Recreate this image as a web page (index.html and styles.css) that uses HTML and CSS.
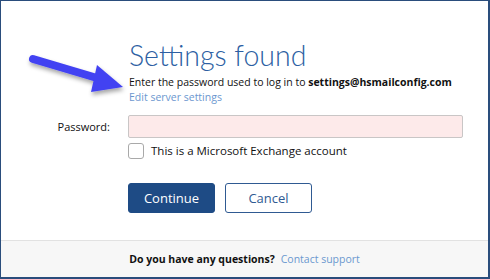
FILE: index.html
```html
<!DOCTYPE html>
<html lang="en">
<head>
  <meta charset="UTF-8" />
  <meta name="viewport" content="width=device-width, initial-scale=1" />
  <title>Settings found</title>
<link rel="stylesheet" href="styles.css">
</head>
<body>

  <div class="frame">

    <!-- Annotation arrow -->
    <svg class="arrow" width="110" height="60" viewBox="0 0 110 60">
      <defs>
        <filter id="shadow" x="-20%" y="-20%" width="150%" height="160%">
          <feDropShadow dx="1" dy="3" stdDeviation="2" flood-color="#000" flood-opacity="0.35" />
        </filter>
      </defs>
      <g filter="url(#shadow)" fill="#4343f2">
        <line x1="8" y1="10" x2="72" y2="29" stroke="#4343f2" stroke-width="8" stroke-linecap="round" />
        <polygon points="72,16 98,38 66,43" />
      </g>
    </svg>

    <div class="main">
      <h1 class="title">Settings found</h1>
      <p class="intro">Enter the password used to log in to <b>settings@hsmailconfig.com</b></p>
      <a href="#" class="edit">Edit server settings</a>

      <label class="label" for="pw">Password:</label>
      <input id="pw" class="input" type="password" />

      <label class="check">
        <span class="box"></span>
        This is a Microsoft Exchange account
      </label>

      <div class="actions">
        <button class="btn primary">Continue</button>
        <button class="btn secondary">Cancel</button>
      </div>
    </div>

    <div class="footer">
      <b>Do you have any questions?</b>
      <a href="#" class="support">Contact support</a>
    </div>

  </div>

</body>
</html>
```

FILE: styles.css
```css
    body {
      margin: 0;
      padding: 0;
      background-color: #fff;
      font-family: 'Open Sans', 'Noto Sans', sans-serif;
      color: #111;
    }

    .frame {
      position: relative;
      width: 490px;
      height: 279px;
      box-sizing: border-box;
      border: solid #2a4d7c;
      border-width: 1px 2px 2px 1px;
      display: flex;
      flex-direction: column;
      background: #fff;
    }

    .arrow {
      position: absolute;
      top: 48px;
      left: 24px;
    }

    .main {
      flex: 1;
      display: grid;
      grid-template-columns: 127px 335px;
      align-content: start;
      padding-top: 35px;
    }

    .title {
      grid-column: 2;
      margin: 0;
      font-family: 'Lato', sans-serif;
      font-weight: 300;
      font-size: 28.5px;
      line-height: 39px;
      color: #2d5fa3;
      padding-left: 1px;
    }

    .intro {
      grid-column: 2;
      margin: 0;
      font-size: 10.5px;
      line-height: 15px;
      white-space: nowrap;
      padding-left: 1px;
    }

    .edit {
      grid-column: 2;
      justify-self: start;
      font-size: 10.5px;
      line-height: 15px;
      color: #6b97cf;
      text-decoration: none;
      padding-left: 1px;
    }

    .label {
      grid-column: 1;
      margin-top: 10px;
      height: 23px;
      line-height: 23px;
      text-align: right;
      padding-right: 18px;
      font-size: 11px;
    }

    .input {
      grid-column: 2;
      margin: 10px 0 0;
      height: 23px;
      box-sizing: border-box;
      border: 1px solid #c9c6c6;
      border-radius: 2px;
      background: #fdeaea;
      outline: none;
    }

    .check {
      grid-column: 2;
      display: flex;
      align-items: center;
      gap: 7px;
      margin-top: 5px;
      font-size: 11.5px;
      line-height: 16px;
    }

    .box {
      width: 16px;
      height: 16px;
      box-sizing: border-box;
      border: 1px solid #a9a9a9;
      border-radius: 3px;
      background: #fff;
    }

    .actions {
      grid-column: 2;
      display: flex;
      gap: 10px;
      margin-top: 24px;
    }

    .btn {
      width: 87px;
      height: 30px;
      border-radius: 3px;
      font-family: 'Open Sans', 'Noto Sans', sans-serif;
      font-size: 13px;
      cursor: pointer;
    }

    .primary {
      background: #1e4b85;
      border: 1px solid #1e4b85;
      color: #fff;
    }

    .secondary {
      background: #fff;
      border: 1px solid #2f5a92;
      color: #2f5a92;
    }

    .footer {
      height: 36px;
      border-top: 1px solid #e2e2e2;
      background: #f7f7f7;
      display: flex;
      justify-content: center;
      align-items: center;
      gap: 6px;
      font-size: 10.5px;
    }

    .support {
      color: #6b97cf;
      text-decoration: none;
    }
```
